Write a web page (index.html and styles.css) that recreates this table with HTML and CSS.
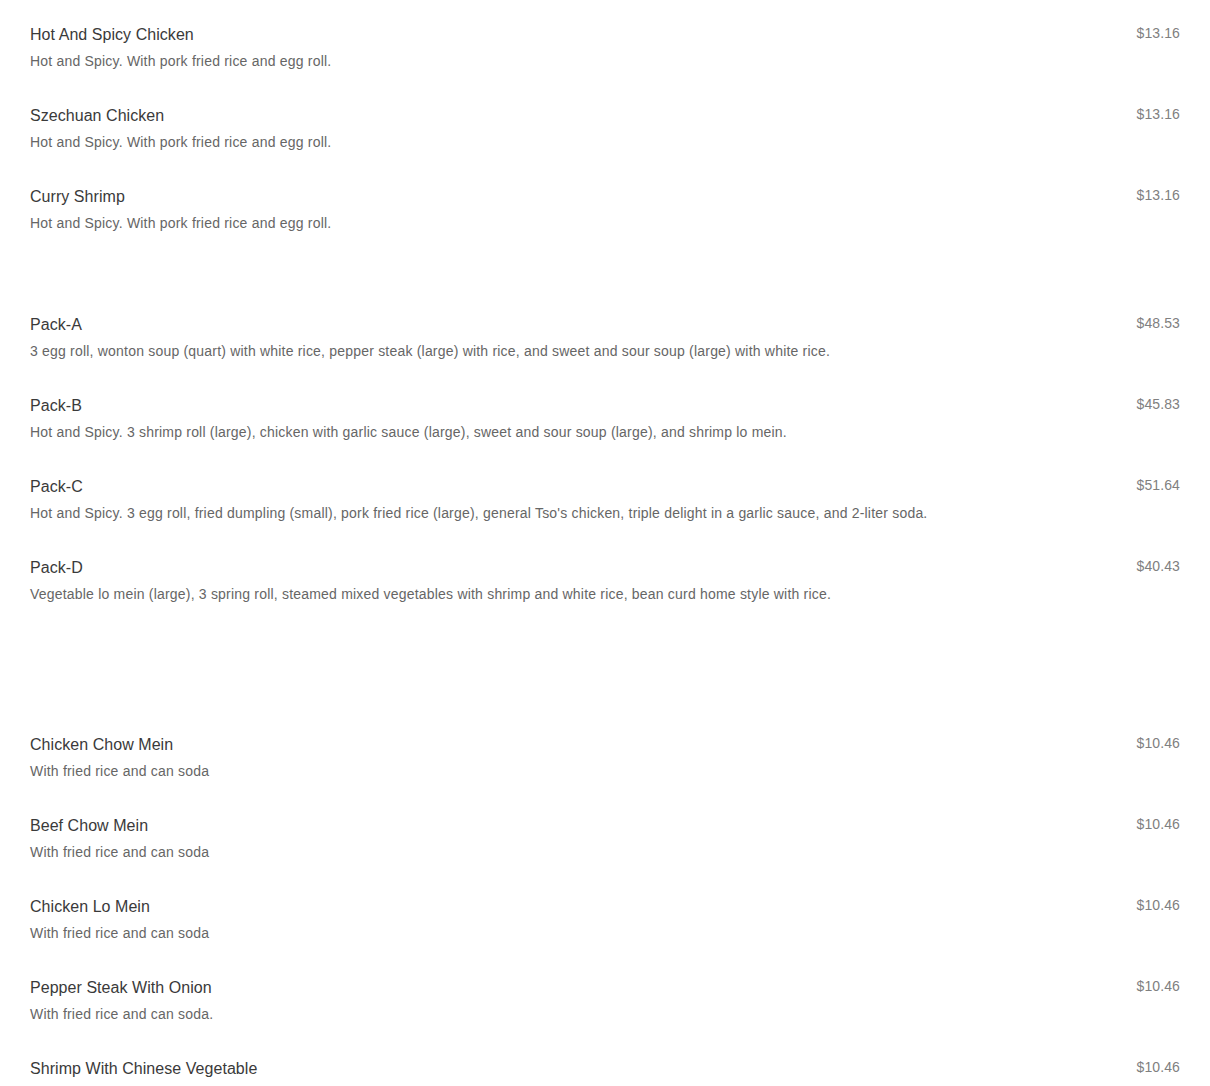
FILE: index.html
```html
<!DOCTYPE html>
<html lang="en">
<head>
  <meta charset="UTF-8" />
  <meta name="viewport" content="width=device-width, initial-scale=1.0"/>
  <title>Menu</title>
  <link rel="stylesheet" href="styles.css">
</head>
<body>
  <div class="menu">
    <section class="section">
      <div class="item">
        <div class="info">
          <div class="name">Hot And Spicy Chicken</div>
          <div class="desc">Hot and Spicy. With pork fried rice and egg roll.</div>
        </div>
        <div class="price">$13.16</div>
      </div>
      <div class="item">
        <div class="info">
          <div class="name">Szechuan Chicken</div>
          <div class="desc">Hot and Spicy. With pork fried rice and egg roll.</div>
        </div>
        <div class="price">$13.16</div>
      </div>
      <div class="item">
        <div class="info">
          <div class="name">Curry Shrimp</div>
          <div class="desc">Hot and Spicy. With pork fried rice and egg roll.</div>
        </div>
        <div class="price">$13.16</div>
      </div>
    </section>

    <section class="section packs">
      <div class="item">
        <div class="info">
          <div class="name">Pack-A</div>
          <div class="desc">3 egg roll, wonton soup (quart) with white rice, pepper steak (large) with rice, and sweet and sour soup (large) with white rice.</div>
        </div>
        <div class="price">$48.53</div>
      </div>
      <div class="item">
        <div class="info">
          <div class="name">Pack-B</div>
          <div class="desc">Hot and Spicy. 3 shrimp roll (large), chicken with garlic sauce (large), sweet and sour soup (large), and shrimp lo mein.</div>
        </div>
        <div class="price">$45.83</div>
      </div>
      <div class="item">
        <div class="info">
          <div class="name">Pack-C</div>
          <div class="desc">Hot and Spicy. 3 egg roll, fried dumpling (small), pork fried rice (large), general Tso's chicken, triple delight in a garlic sauce, and 2-liter soda.</div>
        </div>
        <div class="price">$51.64</div>
      </div>
      <div class="item">
        <div class="info">
          <div class="name">Pack-D</div>
          <div class="desc">Vegetable lo mein (large), 3 spring roll, steamed mixed vegetables with shrimp and white rice, bean curd home style with rice.</div>
        </div>
        <div class="price">$40.43</div>
      </div>
    </section>

    <section class="section combos">
      <div class="item">
        <div class="info">
          <div class="name">Chicken Chow Mein</div>
          <div class="desc">With fried rice and can soda</div>
        </div>
        <div class="price">$10.46</div>
      </div>
      <div class="item">
        <div class="info">
          <div class="name">Beef Chow Mein</div>
          <div class="desc">With fried rice and can soda</div>
        </div>
        <div class="price">$10.46</div>
      </div>
      <div class="item">
        <div class="info">
          <div class="name">Chicken Lo Mein</div>
          <div class="desc">With fried rice and can soda</div>
        </div>
        <div class="price">$10.46</div>
      </div>
      <div class="item">
        <div class="info">
          <div class="name">Pepper Steak With Onion</div>
          <div class="desc">With fried rice and can soda.</div>
        </div>
        <div class="price">$10.46</div>
      </div>
      <div class="item">
        <div class="info">
          <div class="name">Shrimp With Chinese Vegetable</div>
          <div class="desc">With fried rice and can soda.</div>
        </div>
        <div class="price">$10.46</div>
      </div>
    </section>
  </div>
</body>
</html>
```

FILE: styles.css
```css
body {
  font-family: "Liberation Sans", Arial, sans-serif;
  background-color: #fff;
  margin: 0;
  padding: 0;
}
.menu {
  padding: 24px 30px 0 30px;
}
.packs {
  margin-top: 47px;
}
.combos {
  margin-top: 96px;
}
.item {
  display: flex;
  justify-content: space-between;
  align-items: flex-start;
  height: 81px;
}
.name {
  font-size: 16px;
  line-height: 20px;
  padding-top: 1px;
  letter-spacing: 0.05px;
  color: #3a3a3a;
}
.desc {
  font-size: 14px;
  line-height: 20px;
  margin-top: 6px;
  letter-spacing: 0.2px;
  color: #666;
}
.price {
  font-size: 14px;
  line-height: 20px;
  margin-top: -1px;
  letter-spacing: 0.1px;
  color: #808080;
}
```
